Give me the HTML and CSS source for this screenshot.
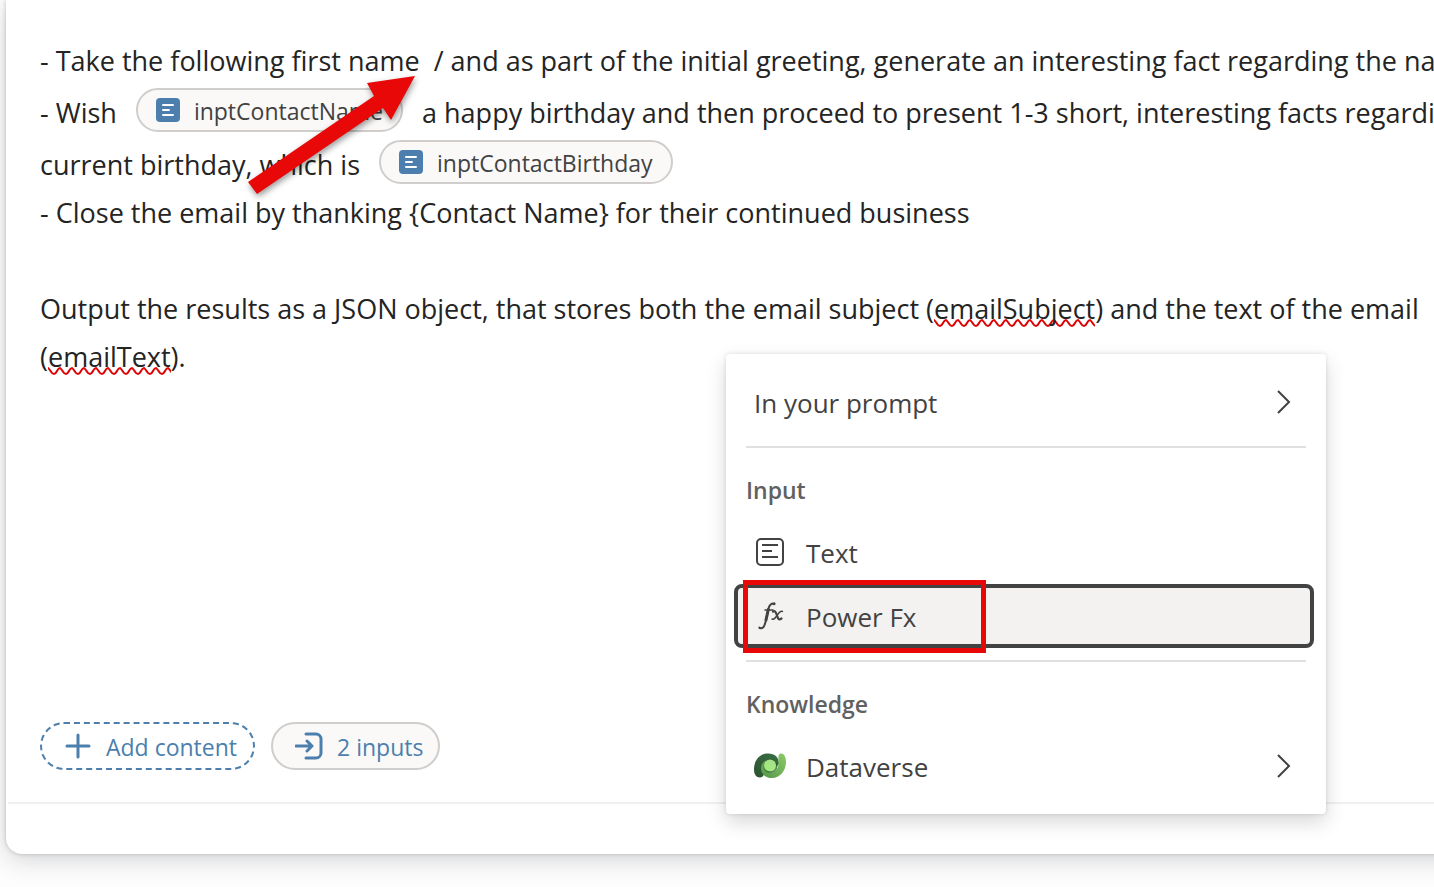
FILE: index.html
```html
<!DOCTYPE html>
<html lang="en">
<head>
<meta charset="utf-8">
<meta name="viewport" content="width=device-width, initial-scale=1">
<title>Prompt editor</title>
<link rel="stylesheet" href="styles.css">
</head>
<body>
<main class="card">
  <div class="editor" role="textbox" aria-multiline="true" aria-label="Prompt">
    <p class="line">- Take the following first name&nbsp; / and as part of the initial greeting, generate an interesting fact regarding the name</p>
    <p class="line">- Wish <span class="token"><svg class="token-icon" viewBox="0 0 24 24" aria-hidden="true"><rect width="24" height="24" rx="4" fill="#4c7fad"/><path d="M7 7h10M7 12h6M7 17h10" stroke="#fff" stroke-width="2" stroke-linecap="round"/></svg><span class="token-name">inptContactName</span></span> a happy birthday and then proceed to present 1-3 short, interesting facts regarding</p>
    <p class="line">current birthday, which is <span class="token"><svg class="token-icon" viewBox="0 0 24 24" aria-hidden="true"><rect width="24" height="24" rx="4" fill="#4c7fad"/><path d="M7 7h10M7 12h6M7 17h10" stroke="#fff" stroke-width="2" stroke-linecap="round"/></svg><span class="token-name">inptContactBirthday</span></span></p>
    <p class="line">- Close the email by thanking {Contact Name} for their continued business</p>
    <p class="line"><br></p>
    <p class="line">Output the results as a JSON object, that stores both the email subject (<span class="misspelt">emailSubject</span>) and the text of the email<br>(<span class="misspelt">emailText</span>).</p>
  </div>
  <div class="toolbar">
    <button class="pill pill-dashed" type="button">
      <svg class="pill-icon" viewBox="0 0 28 28" aria-hidden="true"><path d="M14 3v22M3 14h22" /></svg>
      <span class="pill-label">Add content</span>
    </button>
    <button class="pill pill-solid" type="button">
      <svg class="pill-icon" viewBox="0 0 28 28" aria-hidden="true"><path d="M11 2h10a5 5 0 0 1 5 5v14a5 5 0 0 1-5 5H11M1 14h16M12 9l5 5-5 5"/></svg>
      <span class="pill-label">2 inputs</span>
    </button>
  </div>
  <footer class="card-footer"></footer>
</main>

<div class="menu" role="menu">
  <button class="menu-item" type="button" role="menuitem">
    <span class="menu-label">In your prompt</span>
    <svg class="chevron" viewBox="0 0 16 28" aria-hidden="true"><path d="M2 3l11 11L2 25"/></svg>
  </button>
  <hr class="rule">
  <h2 class="menu-heading">Input</h2>
  <button class="menu-item" type="button" role="menuitem">
    <svg class="menu-icon" viewBox="0 0 32 32" fill="none" stroke="#424242" stroke-width="2" aria-hidden="true"><rect x="3" y="3" width="26" height="26" rx="4"/><path d="M8 9h16M8 15h10M8 21h16"/></svg>
    <span class="menu-label">Text</span>
  </button>
  <button class="menu-item is-focused" type="button" role="menuitem">
    <svg class="menu-icon" viewBox="0 0 32 32" fill="none" stroke="#424242" stroke-linecap="round" aria-hidden="true"><path d="M5.500 28c4 1 5-2 6-6L14.500 8.500c1-4 2.500-5.500 6-5" stroke-width="2"/><path d="M12 20L14.300 9.500" stroke-width="3"/><path d="M11 10h8" stroke-width="1.500"/><circle cx="5.500" cy="27.500" r="1" fill="#424242" stroke="none"/><circle cx="20" cy="4" r="1.300" fill="#424242" stroke="none"/><path d="M19 11.500c2-1.500 3 1 4 4s1.500 5 4.500 3" stroke-width="2.200"/><path d="M28.500 11.500c-2-1-3.500 1-5.500 4s-3 4.500-5 3.500" stroke-width="1.400"/></svg>
    <span class="menu-label">Power Fx</span>
    <span class="highlight" aria-hidden="true"></span>
  </button>
  <hr class="rule">
  <h2 class="menu-heading">Knowledge</h2>
  <button class="menu-item" type="button" role="menuitem">
    <svg class="menu-icon" viewBox="0 0 32 32" aria-hidden="true">
      <defs>
        <linearGradient id="dark" x1="0" y1="1" x2="1" y2="0"><stop offset="0" stop-color="#2c5230"/><stop offset="1" stop-color="#397044"/></linearGradient>
        <linearGradient id="light" x1="1" y1="0" x2="0" y2="1"><stop offset="0" stop-color="#8ccb68"/><stop offset="1" stop-color="#529646"/></linearGradient>
        <linearGradient id="core" x1="0" y1="0" x2="0" y2="1"><stop offset="0" stop-color="#a5df8b"/><stop offset="1" stop-color="#a3ec7c"/></linearGradient>
      </defs>
      <path d="M6 27.500C2 27.500 0 24 0 19.500C0 10 6 3.500 14 3.500c7 0 11 4 11 10.500L17 22c-4 0-5 0-7 2.500c-1 2-2 3-4 3z" fill="url(#dark)"/>
      <path d="M27 3.500c3 0 5 3.500 5 8c0 9.500-6 16.500-14 16.500C11.500 28 7 24 7 18.500c0-4 2-7 6-8c-3 3-3 8 0 10.500c5 4 11 0 11.500-7c0-4-1-10.500 2.500-10.500z" fill="url(#light)"/>
      <circle cx="16.500" cy="16" r="7" fill="#2f642f" opacity=".75"/>
      <circle cx="16" cy="15.500" r="6" fill="url(#core)"/>
    </svg>
    <span class="menu-label">Dataverse</span>
    <svg class="chevron" viewBox="0 0 16 28" aria-hidden="true"><path d="M2 3l11 11L2 25"/></svg>
  </button>
</div>

<svg class="arrow" viewBox="0 0 180 130" aria-hidden="true"><path d="M175 6L127 13l7 13L8 112l9 12 126-86 8 12z" fill="#e90808"/></svg>
</body>
</html>
```
FILE: styles.css
```css
* { box-sizing: border-box; }

body {
  margin: 0;
  min-height: 100vh;
  display: flex;
  flex-direction: column;
  padding: 0 0 33px 6px;
  overflow: hidden;
  background: #fdfdfe;
  color: #242424;
  font-family: "Open Sans", "Noto Sans", sans-serif;
  font-size: 27px;
  line-height: 48px;
}

button { font: inherit; color: inherit; cursor: pointer; }

.card {
  flex: 1;
  display: flex;
  flex-direction: column;
  margin-right: -40px;
  border-radius: 0 0 16px 16px;
  background: #fff;
  box-shadow: 0 0 4px rgba(0, 0, 0, .2), 0 6px 24px rgba(20, 25, 30, .18);
}

.editor { flex: 1; padding: 37px 0 0 34px; }

.line { margin: 0; white-space: nowrap; }

.token {
  display: inline-flex;
  align-items: center;
  gap: 14px;
  height: 44px;
  margin: 3px 12px;
  padding: 0 18px;
  border: 2px solid #d0cecc;
  border-radius: 22px;
  background: #faf9f8;
  color: #424242;
  font-size: 23px;
  line-height: 24px;
  vertical-align: 1px;
}

.token-name { padding-top: 2px; }

.token-icon { width: 24px; height: 24px; }

.misspelt {
  background: url("data:image/svg+xml,%3Csvg xmlns='http://www.w3.org/2000/svg' width='12' height='8'%3E%3Cpath d='M-1 0L0 1C3 3 3 7 6 7S9 1 12 1L13 2' fill='none' stroke='%23e00000' stroke-width='2'/%3E%3C/svg%3E") repeat-x left bottom;
}

.toolbar { display: flex; gap: 16px; padding: 0 34px 32px; }

.pill {
  display: flex;
  align-items: center;
  gap: 14px;
  height: 48px;
  padding: 0 16px 0 22px;
  border-radius: 24px;
  color: #4c7fad;
  font-size: 23px;
  line-height: 24px;
}

.pill-label { padding-top: 2px; }

.pill-dashed { border: 2px dashed #4c7fad; background: #fff; }
.pill-solid { border: 2px solid #d0cecc; background: #faf9f8; padding-right: 15px; }

.pill-icon {
  width: 28px;
  height: 28px;
  fill: none;
  stroke: #4c7fad;
  stroke-width: 3;
  stroke-linecap: round;
  stroke-linejoin: round;
}

.card-footer { height: 52px; margin-left: 2px; border-top: 2px solid #f0f0f0; }

.menu {
  position: absolute;
  left: 726px;
  top: 354px;
  width: 600px;
  padding: 16px 12px 16px 8px;
  border-radius: 4px;
  background: #fff;
  color: #424242;
  font-size: 26px;
  box-shadow: 0 0 4px rgba(0, 0, 0, .12), 0 8px 20px rgba(0, 0, 0, .16);
}

.menu-item {
  position: relative;
  display: flex;
  align-items: center;
  gap: 20px;
  width: 100%;
  height: 64px;
  padding: 0 18px 0 16px;
  border: 4px solid transparent;
  border-radius: 8px;
  background: none;
  line-height: 32px;
  text-align: left;
}

.menu-label { padding-top: 2px; }

.is-focused { border-color: #424242; background: #f3f2f1; }

.menu-icon { width: 32px; height: 32px; }

.chevron {
  width: 16px;
  height: 28px;
  margin-left: auto;
  fill: none;
  stroke: #424242;
  stroke-width: 2;
}

.rule { margin: 12px 8px 12px 12px; border: 0; border-top: 2px solid #e0e0e0; }

.menu-heading {
  margin: 0;
  padding-left: 12px;
  color: #616161;
  font-size: 23px;
  font-weight: 600;
  line-height: 60px;
}

.highlight {
  position: absolute;
  left: 5px;
  top: -8px;
  width: 243px;
  height: 73px;
  border: 5px solid #e90808;
}

.arrow {
  position: absolute;
  left: 240px;
  top: 70px;
  width: 180px;
  height: 130px;
  filter: drop-shadow(1px 3px 3px rgba(0, 0, 0, .4));
}
```
